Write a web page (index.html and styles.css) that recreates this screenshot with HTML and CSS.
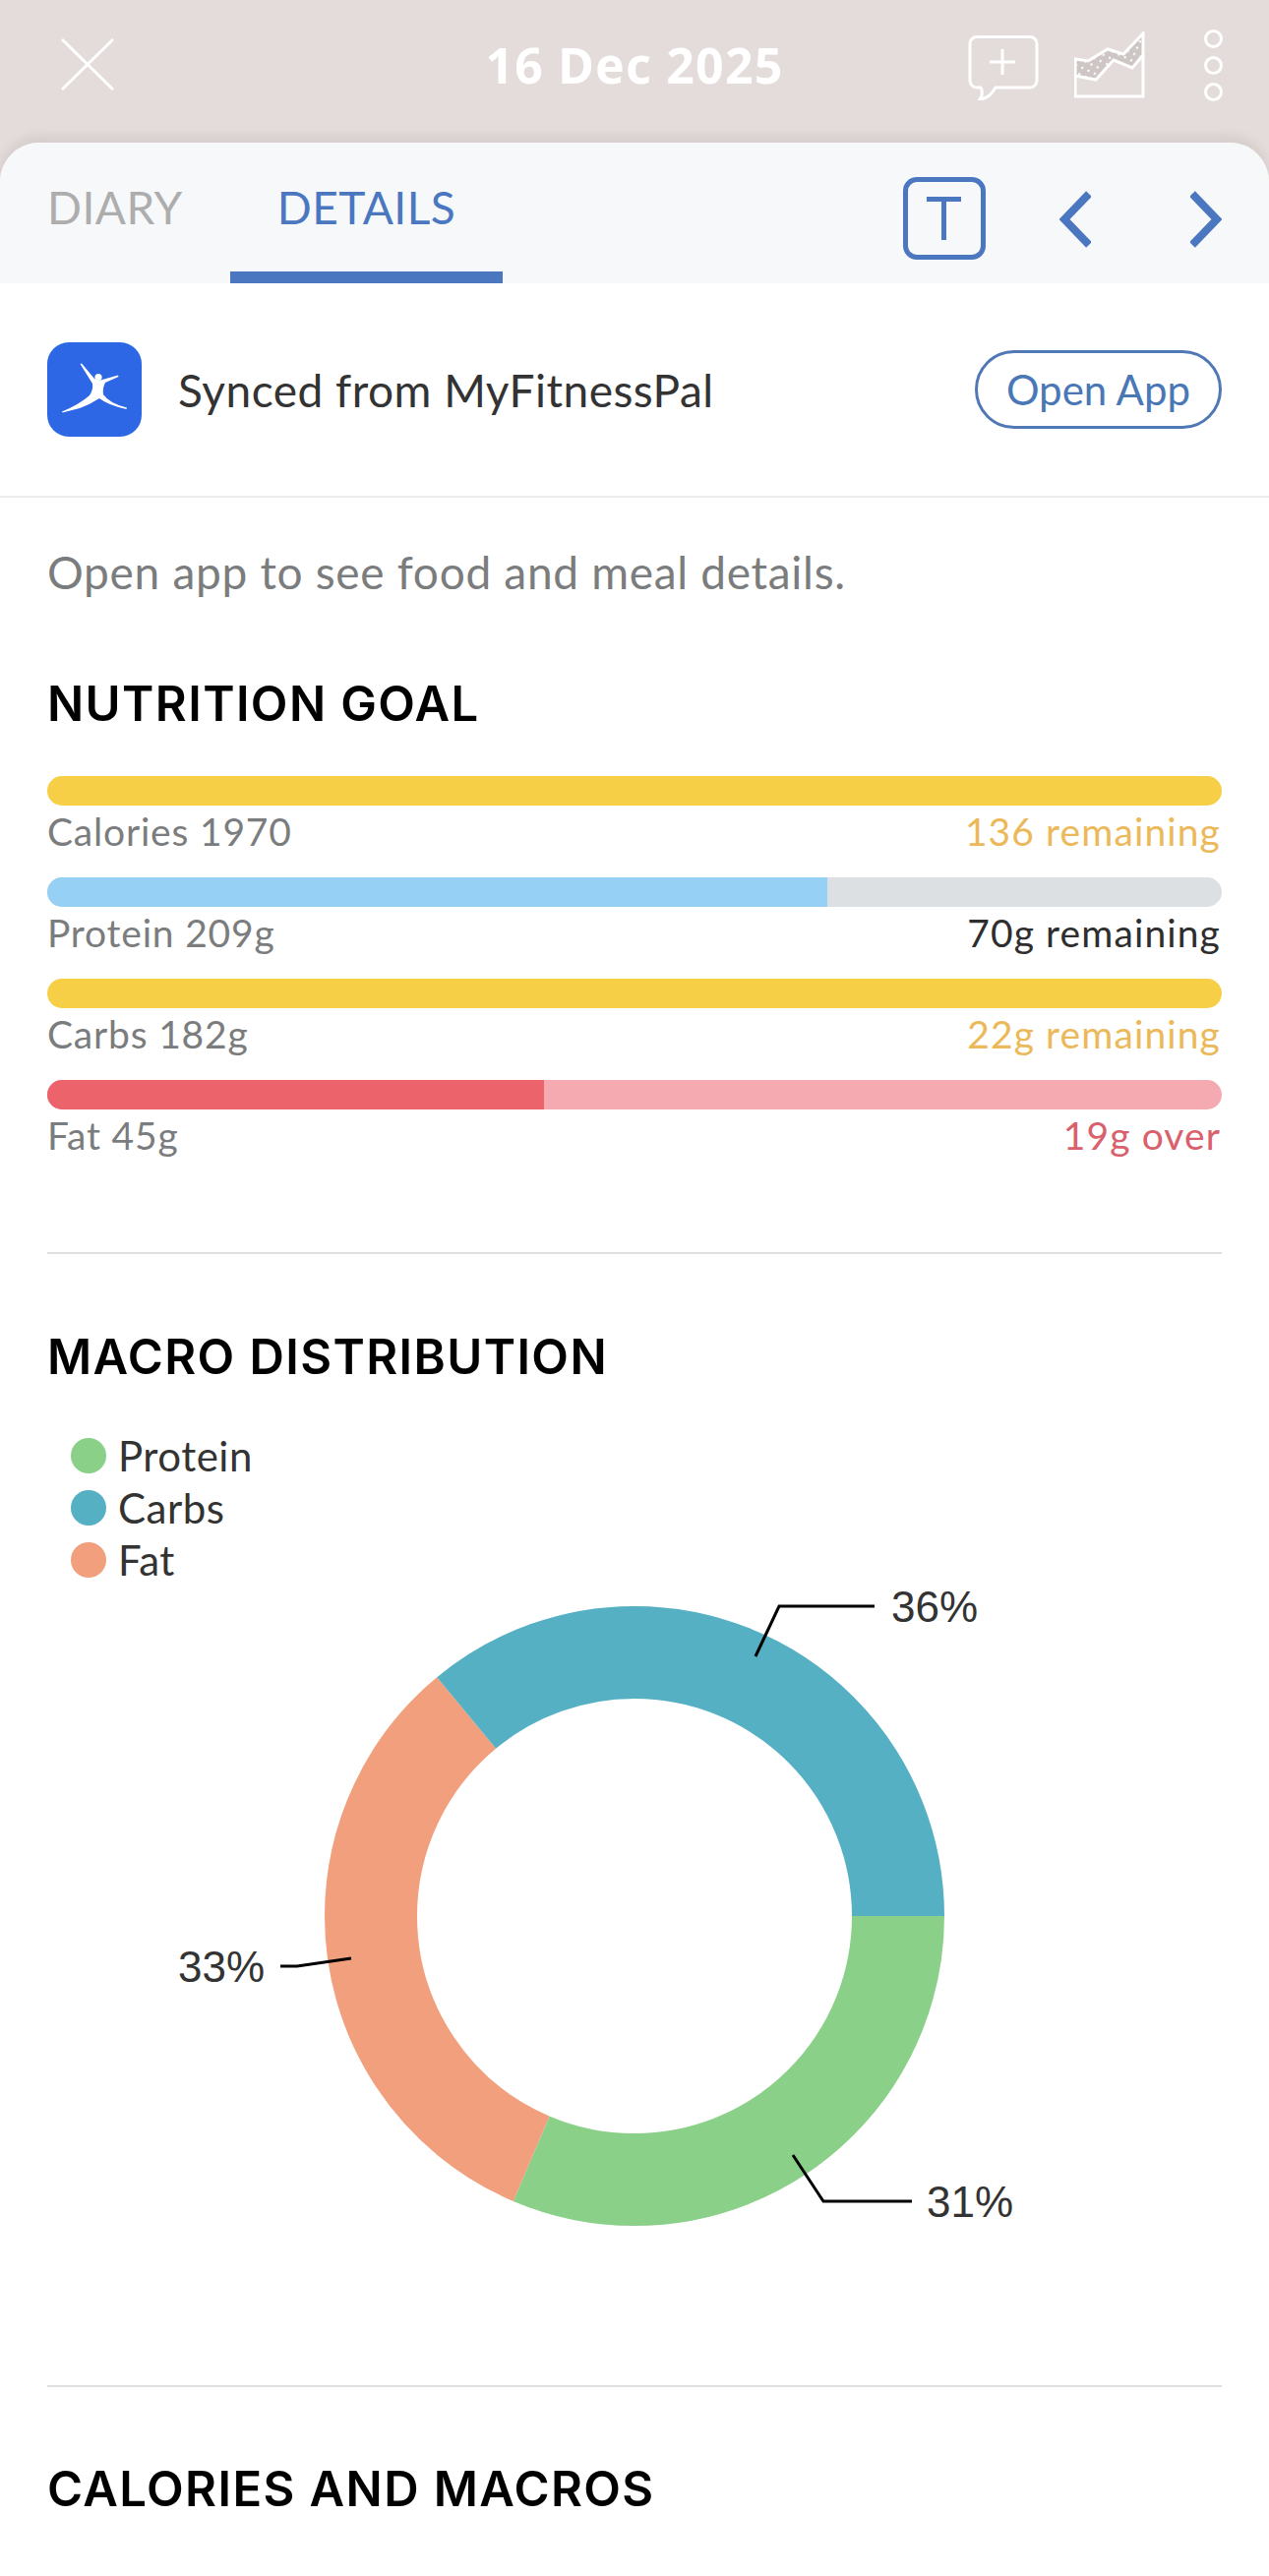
FILE: index.html
```html
<!DOCTYPE html>
<html lang="en">
<head>
    <meta charset="UTF-8">
    <meta name="viewport" content="width=device-width, initial-scale=1.0">
    <title>16 Dec 2025</title>
    <link rel="stylesheet" href="styles.css">
</head>
<body>
    <header class="top-bar">
        <svg class="close-icon" viewBox="0 0 54 53" width="54" height="53">
            <path d="M1 1L53 52M53 1L1 52" />
        </svg>
        <div class="top-date">16 Dec 2025</div>
        <div class="top-actions">
            <svg class="chat-icon" viewBox="0 0 72 66" width="72" height="66">
                <path d="M9 1.5H63a7 7 0 0 1 7 7V46a7 7 0 0 1-7 7H28C24 60 20 64 12 65C15 61 15 57 13 53H9a7 7 0 0 1-7-7V8.5a7 7 0 0 1 7-7Z" />
                <path d="M35 14V40M22 27H48" />
            </svg>
            <svg class="chart-icon" viewBox="0 0 72 68" width="72" height="68">
                <defs>
                    <pattern id="dots" width="7" height="7" patternUnits="userSpaceOnUse" patternTransform="rotate(25)">
                        <rect width="7" height="7" fill="#cdc6c4" />
                        <circle cx="2" cy="2" r="1.2" fill="#fff" />
                    </pattern>
                </defs>
                <path class="chart-band" d="M1 28L14 30L34 18L50 23L70 2V24L59 37L40 29L22 49L1 45Z" />
                <path d="M1 28L14 30L34 18L50 23L70 2V66H1Z" />
                <path d="M1 45L22 49L40 29L59 37L70 24" />
            </svg>
            <div class="more-dots">
                <span></span>
                <span></span>
                <span></span>
            </div>
        </div>
    </header>

    <div class="panel">
        <nav class="tab-bar">
            <div class="tab">DIARY</div>
            <div class="tab tab-active">DETAILS</div>
            <div class="tab-tools">
                <div class="text-btn">
                    <svg viewBox="0 0 36 44" width="36" height="44"><path d="M0 2.5H35M17.5 2.5V44" /></svg>
                </div>
                <svg class="chevron" viewBox="0 0 32 58" width="32" height="58"><path d="M30 3L5 29L30 55" /></svg>
                <svg class="chevron" viewBox="0 0 32 58" width="32" height="58"><path d="M2 3L27 29L2 55" /></svg>
            </div>
        </nav>

        <div class="sync-row">
            <svg class="app-logo" viewBox="0 0 96 96" width="96" height="96">
                <rect width="96" height="96" rx="22" fill="#2d67e6" />
                <circle cx="52" cy="35.5" r="3.6" fill="#fff" />
                <path fill="#fff" d="M33.5 22L35 21.5L48 37Q52 40 56 38L72 33.5L72.5 35L59 41Q56 47 57 53Q63 62 81 66.5L80.5 68Q62 64 53 57Q44 63 33 67L15.5 71.5L15 70.5Q33 63 43 54Q47 48 46 42Z" />
            </svg>
            <div class="sync-text">Synced from MyFitnessPal</div>
            <button class="open-btn">Open App</button>
        </div>

        <section class="section section-goal">
            <p class="hint">Open app to see food and meal details.</p>
            <h2 class="section-title">NUTRITION GOAL</h2>
            <div class="goal-list" id="goalList"></div>
        </section>
        <hr class="divider">

        <section class="section section-macro">
            <h2 class="section-title">MACRO DISTRIBUTION</h2>
            <ul class="legend">
                <li><i class="legend-dot dot-protein"></i>Protein</li>
                <li><i class="legend-dot dot-carbs"></i>Carbs</li>
                <li><i class="legend-dot dot-fat"></i>Fat</li>
            </ul>
            <svg class="donut" viewBox="0 0 1194 821" width="1194" height="821">
                <g class="donut-ring">
                    <circle cx="597" cy="344" r="268" pathLength="100" stroke="#8bd088" stroke-dasharray="31.4 68.6" stroke-dashoffset="0" />
                    <circle cx="597" cy="344" r="268" pathLength="100" stroke="#f19f7c" stroke-dasharray="32.6 67.4" stroke-dashoffset="-31.4" />
                    <circle cx="597" cy="344" r="268" pathLength="100" stroke="#54b0c2" stroke-dasharray="36 64" stroke-dashoffset="-64" />
                </g>
                <g class="donut-leaders">
                    <path d="M720 80L744 29H841" />
                    <path d="M758 587L789 634H879" />
                    <path d="M237 395H254L309 387" />
                </g>
                <text class="donut-label" x="858" y="45">36%</text>
                <text class="donut-label" x="894" y="650">31%</text>
                <text class="donut-label" x="133" y="411">33%</text>
            </svg>
        </section>
        <hr class="divider">

        <section class="section section-last">
            <h2 class="section-title">CALORIES AND MACROS</h2>
        </section>
    </div>

    <script>
        const goals = [
            { name: 'Calories 1970', note: '136 remaining', fill: 100, kind: 'carb' },
            { name: 'Protein 209g', note: '70g remaining', fill: 66.4, kind: 'protein' },
            { name: 'Carbs 182g', note: '22g remaining', fill: 100, kind: 'carb' },
            { name: 'Fat 45g', note: '19g over', fill: 42.3, kind: 'fat' }
        ];

        const list = document.getElementById('goalList');
        goals.forEach(goal => {
            const row = document.createElement('div');
            row.className = `goal-row goal-${goal.kind}`;
            row.innerHTML = `
                <div class="goal-track"><div class="goal-fill" style="width: ${goal.fill}%"></div></div>
                <div class="goal-labels">
                    <span class="goal-name">${goal.name}</span>
                    <span class="goal-note">${goal.note}</span>
                </div>
            `;
            list.appendChild(row);
        });
    </script>
</body>
</html>
```

FILE: styles.css
```css
:root {
    --blue: #4a77c0;
    --grey-text: #7b7c7d;
    --dark-text: #333333;
}

* {
    margin: 0;
    padding: 0;
    box-sizing: border-box;
}

html, body {
    height: 2619px;
    overflow: hidden;
}

body {
    font-family: Lato, "Noto Sans", sans-serif;
    background-color: #e3dcda;
    color: var(--dark-text);
}

/* top bar */
.top-bar {
    height: 145px;
    position: relative;
    display: flex;
    align-items: flex-start;
    justify-content: space-between;
    padding: 32px 47px 0 62px;
}

.close-icon {
    margin-top: 7px;
}

.close-icon path,
.chat-icon path,
.chart-icon path {
    fill: none;
    stroke: #fff;
    stroke-width: 3;
}

.chart-icon .chart-band {
    fill: url(#dots);
    stroke: none;
}

.top-date {
    position: absolute;
    left: 0;
    right: 0;
    top: 36px;
    text-align: center;
    font-family: "Noto Sans", sans-serif;
    font-weight: 700;
    font-size: 50px;
    letter-spacing: 1.2px;
    line-height: 60px;
    color: #fff;
}

.top-actions {
    display: flex;
    align-items: flex-start;
    gap: 20px;
}

.chat-icon {
    margin-top: 4px;
    margin-right: 16px;
}

.chart-icon {
    margin-top: 0;
}

.more-dots {
    display: flex;
    flex-direction: column;
    gap: 8px;
    margin-left: 40px;
    margin-top: -2px;
}

.more-dots span {
    width: 19px;
    height: 19px;
    border: 3px solid #fff;
    border-radius: 50%;
}

/* white panel */
.panel {
    height: 2474px;
    background-color: #fff;
    border-radius: 40px 40px 0 0;
    box-shadow: 0 -8px 8px rgba(120, 100, 100, 0.1);
}

.tab-bar {
    height: 143px;
    display: flex;
    background-color: #f7f8f9;
    border-radius: 40px 40px 0 0;
    position: relative;
}

.tab {
    font-size: 46px;
    letter-spacing: 0.5px;
    line-height: 56px;
    padding-top: 38px;
    color: #adadae;
}

.tab:first-child {
    margin-left: 48px;
    width: 186px;
}

.tab-active {
    width: 277px;
    text-align: center;
    color: var(--blue);
    border-bottom: 12px solid var(--blue);
}

.tab-tools {
    margin-left: auto;
    padding: 35px 48px 0 0;
    display: flex;
    align-items: flex-start;
}

.text-btn {
    width: 84px;
    height: 84px;
    border: 5px solid var(--blue);
    border-radius: 14px;
    display: flex;
    align-items: center;
    justify-content: center;
    margin-right: 75px;
}

.text-btn svg path,
.chevron path {
    fill: none;
    stroke: var(--blue);
}

.text-btn svg path {
    stroke-width: 5;
}

.chevron {
    margin-top: 14px;
}

.chevron path {
    stroke-width: 8;
}

.chevron + .chevron {
    margin-left: 101px;
}

/* synced row */
.sync-row {
    height: 218px;
    display: flex;
    align-items: center;
    padding: 0 48px;
    border-bottom: 2px solid #ececec;
}

.app-logo {
    margin-right: 37px;
}

.sync-text {
    font-size: 46px;
    letter-spacing: 0.5px;
    flex: 1;
}

.open-btn {
    width: 251px;
    height: 80px;
    background: none;
    border: 3px solid #4f78b4;
    border-radius: 40px;
    font-family: inherit;
    font-size: 42px;
    color: #4a77b5;
}

/* sections */
.section {
    padding: 0 48px;
}

.divider {
    border: none;
    height: 2px;
    margin: 0 48px;
    background-color: #e0e0e0;
}

.section-title {
    font-family: Inter, "Noto Sans", sans-serif;
    font-size: 49px;
    font-weight: 600;
    letter-spacing: 1.4px;
    line-height: 56px;
    color: #000;
}

.section-goal {
    padding-top: 48px;
    padding-bottom: 96px;
}

.section-macro {
    padding-top: 77px;
}

.section-last {
    padding-top: 76px;
}

.hint {
    font-size: 46px;
    letter-spacing: 0.7px;
    line-height: 56px;
    color: var(--grey-text);
    margin-bottom: 78px;
}

.goal-list {
    margin-top: 45px;
    display: flex;
    flex-direction: column;
    gap: 24px;
}

.goal-track {
    height: 30px;
    border-radius: 15px;
    overflow: hidden;
    background-color: #dce0e3;
}

.goal-fill {
    height: 100%;
}

.goal-labels {
    display: flex;
    justify-content: space-between;
    margin-top: 3px;
    font-size: 39px;
    letter-spacing: 0.8px;
    line-height: 46px;
}

.goal-name {
    color: var(--grey-text);
}

.goal-note {
    letter-spacing: 1.1px;
    margin-right: 1px;
}

.goal-carb .goal-track {
    background-color: #f6cf46;
}

.goal-carb .goal-fill {
    background-color: #f6cf46;
}

.goal-carb .goal-note {
    color: #ecb95a;
}

.goal-protein .goal-fill {
    background-color: #96d1f5;
}

.goal-protein .goal-note {
    color: #2e2e2e;
}

.goal-fat .goal-track {
    background-color: #f5aab2;
}

.goal-fat .goal-fill {
    background-color: #ec636c;
}

.goal-fat .goal-note {
    color: #d9606c;
}

/* macro chart */
.legend {
    list-style: none;
    margin-top: 54px;
    padding-left: 24px;
    display: flex;
    flex-direction: column;
    gap: 17px;
}

.legend li {
    display: flex;
    align-items: center;
    height: 36px;
    font-size: 42px;
    letter-spacing: 0.5px;
}

.legend-dot {
    width: 36px;
    height: 36px;
    border-radius: 50%;
    margin-right: 12px;
}

.dot-protein {
    background-color: #8bd088;
}

.dot-carbs {
    background-color: #54b0c2;
}

.dot-fat {
    background-color: #f19f7c;
}

.donut {
    display: block;
}

.donut-ring circle {
    fill: none;
    stroke-width: 94;
}

.donut-leaders path {
    fill: none;
    stroke: #000;
    stroke-width: 3;
}

.donut-label {
    font-family: "Liberation Sans", sans-serif;
    font-size: 44px;
    fill: #333;
}
```
